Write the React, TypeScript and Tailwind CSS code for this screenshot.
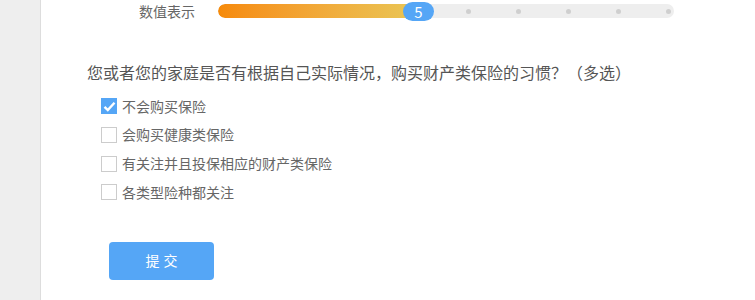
import React from 'react';

const font = { fontFamily: '"Noto Sans CJK SC", "Noto Sans", sans-serif' };

const options = [
  { label: '不会购买保险', checked: true },
  { label: '会购买健康类保险', checked: false },
  { label: '有关注并且投保相应的财产类保险', checked: false },
  { label: '各类型险种都关注', checked: false },
];

function Slider() {
  // value 5 of 10, 50px per step
  const dots = [6, 7, 8, 9, 10];
  return (
    <div className="relative w-[456px] h-[20px] flex items-center">
      <div className="w-full h-[14px] rounded-full bg-[#eeeeee] overflow-hidden">
        <div className="h-full w-[200px] rounded-full bg-gradient-to-r from-[#f68a08] to-[#e9c655]" />
      </div>
      {dots.map((d) => (
        <span
          key={d}
          className="absolute top-[8px] w-[5px] h-[5px] rounded-full bg-[#cfcfcf]"
          style={{ left: (d - 1) * 50 - 2 }}
        />
      ))}
      <div className="absolute left-[185px] top-[1px] w-[31px] h-[19px] rounded-full bg-[#55a6f6] flex items-center justify-center text-white text-[15px] leading-none">
        5
      </div>
    </div>
  );
}

function Check({ checked }: { checked: boolean }) {
  if (checked) {
    return (
      <span className="w-[16px] h-[16px] bg-[#55a6f6] flex items-center justify-center shrink-0">
        <svg width="13" height="11" viewBox="0 0 13 11">
          <path d="M1.5 5.8 L4.8 9 L11.5 1.8" fill="none" stroke="#fff" strokeWidth="2.4" />
        </svg>
      </span>
    );
  }
  return <span className="w-[16px] h-[16px] border border-[#cccccc] bg-white shrink-0" />;
}

export default function App() {
  return (
    <div className="w-[755px] h-[300px] flex bg-white overflow-hidden" style={font}>
      <div className="w-[41px] h-full bg-[#eeeeee] border-r border-[#dddddd] shrink-0" />
      <div className="flex-1 flex flex-col">
        <div className="flex items-center h-[20px] mt-[1px] pl-[98px] gap-[23px]">
          <span className="text-[14px] text-[#666666] leading-none w-[56px] whitespace-nowrap">数值表示</span>
          <Slider />
        </div>
        <div className="mt-[40px] pl-[46px] text-[16px] text-[#555555] leading-[22px] whitespace-nowrap">
          您或者您的家庭是否有根据自己实际情况，购买财产类保险的习惯？（多选）
        </div>
        <div className="mt-[9px] pl-[60px] flex flex-col">
          {options.map((o) => (
            <div key={o.label} className="h-[28.67px] flex items-center gap-[5px]">
              <Check checked={o.checked} />
              <span className="text-[14px] text-[#666666] whitespace-nowrap">{o.label}</span>
            </div>
          ))}
        </div>
        <div className="mt-[35px] pl-[68px]">
          <button className="w-[105px] h-[38px] pl-[4px] rounded-[4px] bg-[#55a6f6] text-white text-[14px] tracking-[4px]">
            提交
          </button>
        </div>
      </div>
    </div>
  );
}
